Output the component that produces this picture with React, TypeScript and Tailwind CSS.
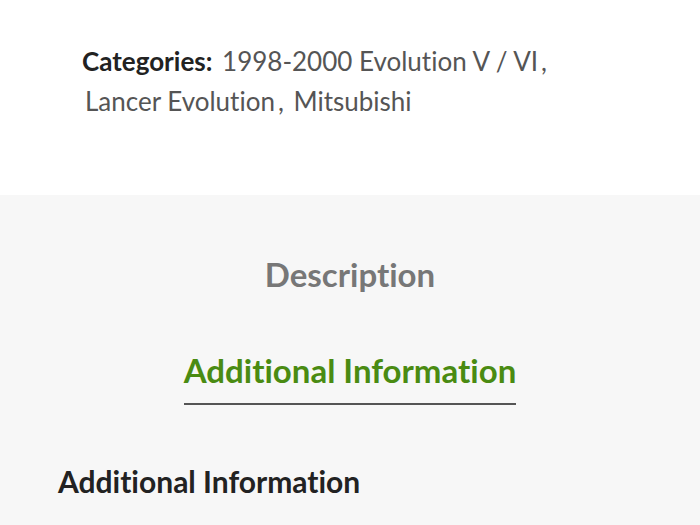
export default function App() {
  return (
    <div className="w-[700px] h-[525px] overflow-hidden bg-white font-['Lato',sans-serif] [font-variant-ligatures:none]">
      <div className="h-[195px] pt-[41px] pl-[82px] pr-[120px]">
        <p className="text-[26px] leading-[40px] text-[#555]">
          <span className="font-bold text-[#222]">Categories:</span>{" "}
          <a className="px-[3px]">1998-2000 Evolution V / VI</a>, <a className="px-[3px]">Lancer Evolution</a>,{" "}
          <a className="px-[3px]">Mitsubishi</a>
        </p>
      </div>
      <div className="bg-[#f7f7f7] h-[330px] flex flex-col">
        <div className="flex flex-col items-center pt-[56px]">
          <div className="text-[33px] font-bold text-[#777] leading-[46px]">Description</div>
          <div className="mt-[50px] text-[33px] font-bold text-[#4a8b12] leading-[46px] pb-[10px] border-b-2 border-[#555]">
            Additional Information
          </div>
        </div>
        <h2 className="mt-[56px] pl-[58px] text-[30px] font-bold text-[#222] leading-[40px]">
          Additional Information
        </h2>
      </div>
    </div>
  );
}
